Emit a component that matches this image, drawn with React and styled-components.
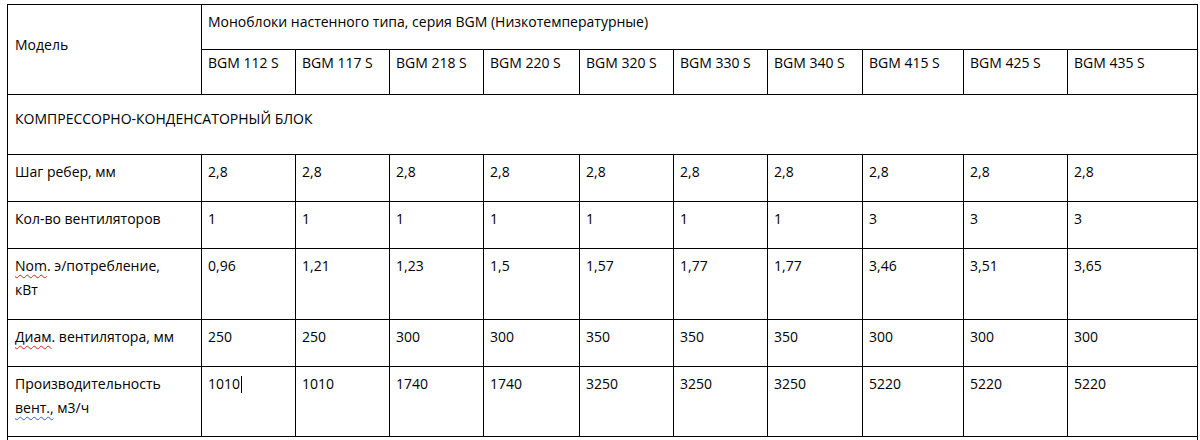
import React from "react";
import styled, { createGlobalStyle } from "styled-components";

const Global = createGlobalStyle`
  html, body { margin: 0; padding: 0; background: #fff; }
  body { font-family: "Open Sans", "Noto Sans", sans-serif; color: #000; }
`;

const Page = styled.div`
  padding: 4px 0 0 7px;
  width: 1200px;
  height: 440px;
  box-sizing: border-box;
  overflow: hidden;
`;

const Table = styled.table`
  border-collapse: collapse;
  table-layout: fixed;
  width: 1190px;
  font-size: 14px;
  line-height: 24px;
`;

const Cell = styled.td`
  border: 1px solid #000;
  padding: ${(p) => p.$pt ?? 6}px ${(p) => p.$pr ?? 4}px 0 ${(p) => p.$pl ?? 6}px;
  vertical-align: top;
  height: ${(p) => p.$h}px;
  box-sizing: border-box;
  white-space: ${(p) => (p.$nowrap ? "nowrap" : "normal")};
`;

const Spell = styled.span`
  text-decoration: underline wavy ${(p) => (p.$blue ? "#3a5bd9" : "#d42020")};
  text-decoration-thickness: 1px;
  text-underline-offset: 3px;
`;

const Caret = styled.span`
  display: inline-block;
  width: 1px;
  height: 17px;
  background: #000;
  vertical-align: -4px;
  margin-left: 1px;
`;

const widths = [194, 94, 94, 94, 96, 94, 94, 95, 101, 104, 130];
const models = ["112", "117", "218", "220", "320", "330", "340", "415", "425", "435"];

const rows = [
  { label: "Шаг ребер, мм", vals: Array(10).fill("2,8"), h: 47, pt: 5 },
  { label: "Кол-во вентиляторов", vals: ["1", "1", "1", "1", "1", "1", "1", "3", "3", "3"], h: 47, pt: 5 },
  {
    label: (
      <>
        <Spell>Nom</Spell>. э/потребление,
        <br />
        кВт
      </>
    ),
    vals: ["0,96", "1,21", "1,23", "1,5", "1,57", "1,77", "1,77", "3,46", "3,51", "3,65"],
    h: 71,
    pt: 5,
  },
  {
    label: (
      <>
        <Spell>Диам</Spell>. вентилятора, мм
      </>
    ),
    vals: ["250", "250", "300", "300", "350", "350", "350", "300", "300", "300"],
    h: 47,
    pt: 5,
  },
  {
    label: (
      <>
        Производительность <Spell $blue>вент.,</Spell> м3/ч
      </>
    ),
    vals: ["1010", "1010", "1740", "1740", "3250", "3250", "3250", "5220", "5220", "5220"],
    h: 70,
    pt: 5,
    caret: true,
  },
];

export default function App() {
  return (
    <>
      <Global />
      <Page>
        <Table>
          <colgroup>
            {widths.map((w, i) => (
              <col key={i} style={{ width: w }} />
            ))}
          </colgroup>
          <tbody>
            <tr>
              <Cell rowSpan={2} $pt={28} $pl={7}>Модель</Cell>
              <Cell colSpan={10} $h={45} $pt={5}>
                Моноблоки настенного типа, серия BGM (Низкотемпературные)
              </Cell>
            </tr>
            <tr>
              {models.map((m) => (
                <Cell key={m} $h={45} $pt={1} $nowrap>
                  BGM {m} S
                </Cell>
              ))}
            </tr>
            <tr>
              <Cell colSpan={11} $h={60} $pt={12} $pl={7}>
                КОМПРЕССОРНО-КОНДЕНСАТОРНЫЙ БЛОК
              </Cell>
            </tr>
            {rows.map((r, i) => (
              <tr key={i}>
                <Cell $h={r.h} $pt={r.pt} $pl={7} $pr={6}>{r.label}</Cell>
                {r.vals.map((v, j) => (
                  <Cell key={j} $h={r.h} $pt={r.pt}>
                    {v}
                    {r.caret && j === 0 ? <Caret /> : null}
                  </Cell>
                ))}
              </tr>
            ))}
            <tr>
              <Cell colSpan={11} $h={40} />
            </tr>
          </tbody>
        </Table>
      </Page>
    </>
  );
}
